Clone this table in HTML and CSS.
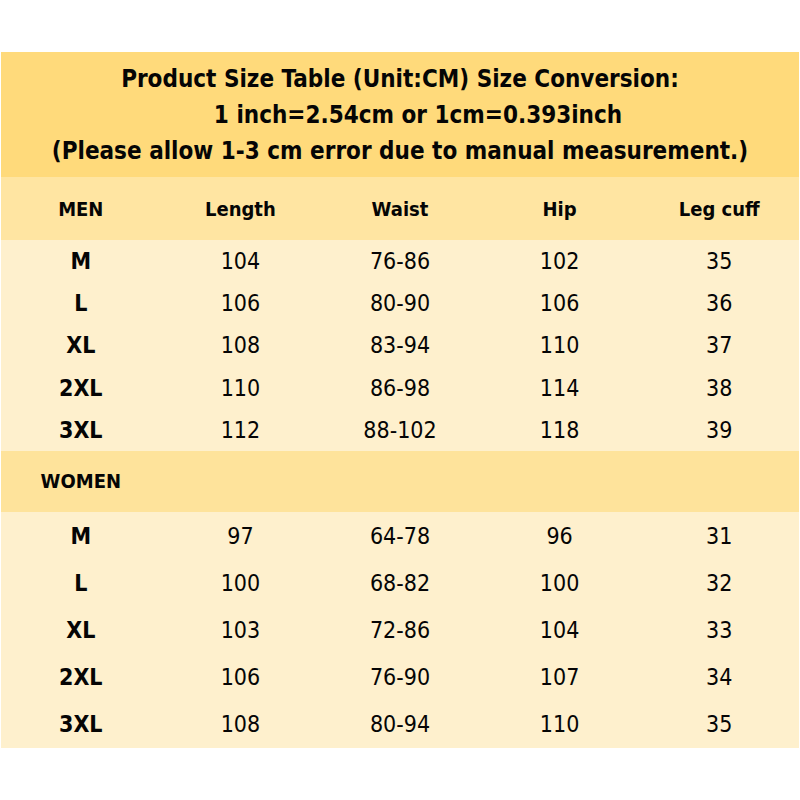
FILE: index.html
```html
<!DOCTYPE html>
<html>
<head>
<meta charset="utf-8">
<link rel="stylesheet" href="styles.css">
</head>
<body>
<div class="sheet">
  <div class="title">
    <div>Product Size Table (Unit:CM) Size Conversion:</div>
    <div class="indent">1 inch=2.54cm or 1cm=0.393inch</div>
    <div>(Please allow 1-3 cm error due to manual measurement.)</div>
  </div>
  <div class="row head">
    <div>MEN</div><div>Length</div><div>Waist</div><div>Hip</div><div>Leg cuff</div>
  </div>
  <div class="group men">
    <div class="row"><div class="size">M</div><div>104</div><div>76-86</div><div>102</div><div>35</div></div>
    <div class="row"><div class="size">L</div><div>106</div><div>80-90</div><div>106</div><div>36</div></div>
    <div class="row"><div class="size">XL</div><div>108</div><div>83-94</div><div>110</div><div>37</div></div>
    <div class="row"><div class="size">2XL</div><div>110</div><div>86-98</div><div>114</div><div>38</div></div>
    <div class="row"><div class="size">3XL</div><div>112</div><div>88-102</div><div>118</div><div>39</div></div>
  </div>
  <div class="row head women">
    <div>WOMEN</div><div></div><div></div><div></div><div></div>
  </div>
  <div class="group wom">
    <div class="row"><div class="size">M</div><div>97</div><div>64-78</div><div>96</div><div>31</div></div>
    <div class="row"><div class="size">L</div><div>100</div><div>68-82</div><div>100</div><div>32</div></div>
    <div class="row"><div class="size">XL</div><div>103</div><div>72-86</div><div>104</div><div>33</div></div>
    <div class="row"><div class="size">2XL</div><div>106</div><div>76-90</div><div>107</div><div>34</div></div>
    <div class="row"><div class="size">3XL</div><div>108</div><div>80-94</div><div>110</div><div>35</div></div>
  </div>
</div>
</body>
</html>
```

FILE: styles.css
```css
html, body {
  margin: 0;
  padding: 0;
  background: #ffffff;
}
body {
  padding: 52px 1px 0 1px;
  font-family: "DejaVu Sans Condensed", "DejaVu Sans", sans-serif;
  color: #050505;
}
.sheet {
  width: 798px;
}
.title {
  background: #ffda7b;
  padding: 9px 0 8px 0;
  text-align: center;
  font-weight: bold;
  font-size: 24px;
  line-height: 36px;
}
.title .indent {
  padding-left: 36px;
}
.row {
  display: grid;
  grid-template-columns: repeat(5, 1fr);
  align-items: center;
  text-align: center;
}
.head {
  background: #ffe5a2;
  height: 63px;
  font-weight: bold;
  font-size: 20px;
}
.head.women {
  background: #fee39b;
  height: 61px;
}
.group {
  background: #fef0cd;
}
.group .row {
  font-size: 23px;
}
.men .row {
  height: 42.2px;
}
.wom .row {
  height: 47.2px;
}
.size {
  font-weight: bold;
  font-size: 23px;
}
```
